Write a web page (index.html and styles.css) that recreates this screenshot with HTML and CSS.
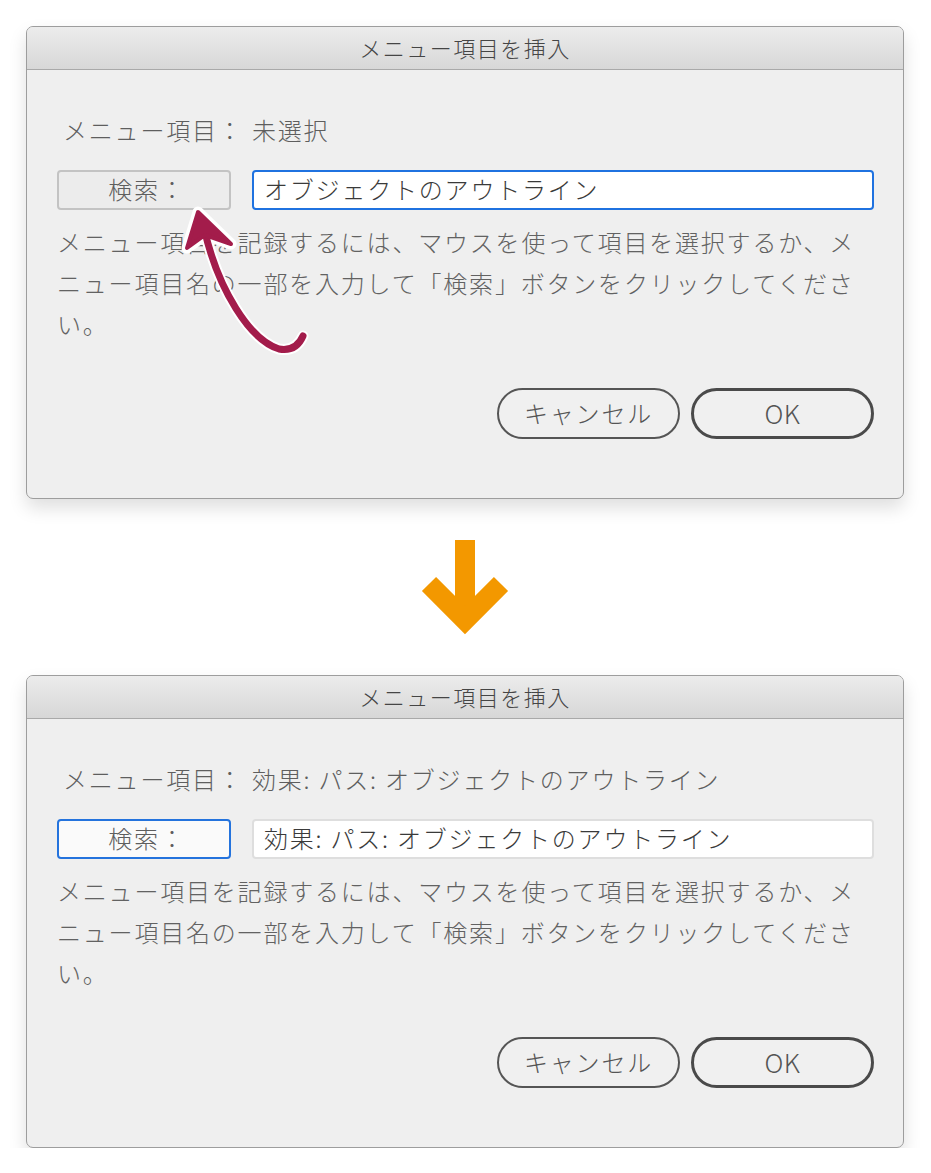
FILE: index.html
```html
<!DOCTYPE html>
<html lang="ja">
<head>
<meta charset="utf-8">
<title>メニュー項目を挿入</title>
<link rel="stylesheet" href="styles.css">
</head>
<body>
<main class="page">
  <section class="dialog">
    <header class="titlebar">メニュー項目を挿入</header>
    <div class="content">
      <div class="item-row">
        <span class="label">メニュー項目：</span>
        <span class="value">未選択</span>
      </div>
      <div class="search-row">
        <button class="search-btn">検索：</button>
        <div class="field field-focus">オブジェクトのアウトライン</div>
      </div>
      <p class="desc">メニュー項目を記録するには、マウスを使って項目を選択するか、メニュー項目名の一部を入力して「検索」ボタンをクリックしてください。</p>
      <div class="actions">
        <button class="btn btn-cancel">キャンセル</button>
        <button class="btn btn-ok">OK</button>
      </div>
    </div>
    <svg class="pointer" viewBox="26 26 878 473" width="878" height="473" aria-hidden="true">
      <g fill="none" stroke="#ffffff" stroke-width="11" stroke-linecap="round" stroke-linejoin="round">
        <path d="M303 336 Q296 352 279 349 C250 340 218 290 204 228"/>
        <path d="M198 212 L187 248 L205 235 L231 244 Z" fill="#ffffff"/>
      </g>
      <g fill="none" stroke="#a31c4b" stroke-width="7" stroke-linecap="round" stroke-linejoin="round">
        <path d="M303 336 Q296 352 279 349 C250 340 218 290 204 228"/>
        <path d="M198 212 L187 248 L205 235 L231 244 Z" fill="#a31c4b" stroke-width="4"/>
      </g>
    </svg>
  </section>

  <div class="transition">
    <svg class="down-arrow" viewBox="0 0 90 96" width="90" height="96" aria-hidden="true">
      <line x1="45" y1="1" x2="45" y2="80" stroke="#f39800" stroke-width="20"/>
      <polyline points="9,45 45,81 81,45" fill="none" stroke="#f39800" stroke-width="20" stroke-linejoin="miter"/>
    </svg>
  </div>

  <section class="dialog">
    <header class="titlebar">メニュー項目を挿入</header>
    <div class="content">
      <div class="item-row">
        <span class="label">メニュー項目：</span>
        <span class="value">効果: パス: オブジェクトのアウトライン</span>
      </div>
      <div class="search-row">
        <button class="search-btn search-btn-focus">検索：</button>
        <div class="field">効果: パス: オブジェクトのアウトライン</div>
      </div>
      <p class="desc">メニュー項目を記録するには、マウスを使って項目を選択するか、メニュー項目名の一部を入力して「検索」ボタンをクリックしてください。</p>
      <div class="actions">
        <button class="btn btn-cancel">キャンセル</button>
        <button class="btn btn-ok">OK</button>
      </div>
    </div>
  </section>
</main>
</body>
</html>
```

FILE: styles.css
```css
* {
  box-sizing: border-box;
}

html, body {
  margin: 0;
  padding: 0;
  background: #ffffff;
}

body {
  font-family: "Noto Sans CJK JP", "Noto Sans", sans-serif;
  font-weight: 300;
  color: #5e5e5e;
}

.page {
  padding: 26px 0 0 26px;
  width: 931px;
}

.dialog {
  position: relative;
  width: 878px;
  height: 473px;
  background: #efefef;
  border: 1px solid #9d9d9d;
  border-radius: 7px;
  box-shadow: 0 9px 18px rgba(0, 0, 0, 0.13);
  display: flex;
  flex-direction: column;
}

.titlebar {
  height: 43px;
  line-height: 40px;
  text-align: center;
  font-size: 22px;
  letter-spacing: 1.5px;
  color: #454545;
  background: linear-gradient(#ececec, #d7d7d7);
  border-bottom: 1px solid #a9a9a9;
  border-radius: 6px 6px 0 0;
}

.content {
  padding: 40px 29px 0 30px;
  display: flex;
  flex-direction: column;
  font-size: 24px;
  letter-spacing: 1.8px;
}

.item-row {
  display: grid;
  grid-template-columns: 195px 1fr;
  height: 40px;
  line-height: 40px;
}

.label {
  padding-left: 6px;
  white-space: nowrap;
}

.value {
  white-space: nowrap;
}

.search-row {
  display: grid;
  grid-template-columns: 174px 1fr;
  column-gap: 21px;
  margin-top: 20px;
  height: 40px;
}

.search-btn {
  font: inherit;
  letter-spacing: inherit;
  color: #5e5e5e;
  background: #ececec;
  border: 2px solid #c3c3c3;
  border-radius: 4px;
  padding: 0 0 2px 6px;
  line-height: 34px;
  text-align: center;
}

.search-btn-focus {
  background: #fafafa;
  border-color: #2473dd;
}

.field {
  background: #ffffff;
  border: 2px solid #dedede;
  border-radius: 4px;
  padding: 0 10px;
  line-height: 34px;
  color: #3a3a3a;
  white-space: nowrap;
}

.field-focus {
  border-color: #1f72e0;
}

.desc {
  margin: 11px 0 0 0;
  width: 812px;
  line-height: 41px;
  color: #626262;
}

.actions {
  display: flex;
  justify-content: flex-end;
  gap: 11px;
  margin-top: 44px;
}

.btn {
  font: inherit;
  letter-spacing: inherit;
  width: 183px;
  height: 51px;
  border-radius: 26px;
  background: #f0f0f0;
  color: #555555;
  padding: 0 0 3px 0;
  text-align: center;
}

.btn-cancel {
  border: 2px solid #555555;
}

.btn-ok {
  border: 3.5px solid #4a4a4a;
  font-size: 26px;
  letter-spacing: 0.5px;
}

.pointer {
  position: absolute;
  left: -1px;
  top: -1px;
  overflow: visible;
  pointer-events: none;
}

.transition {
  width: 878px;
  height: 176px;
  display: flex;
  align-items: center;
  justify-content: center;
}

.down-arrow {
  display: block;
}
```
